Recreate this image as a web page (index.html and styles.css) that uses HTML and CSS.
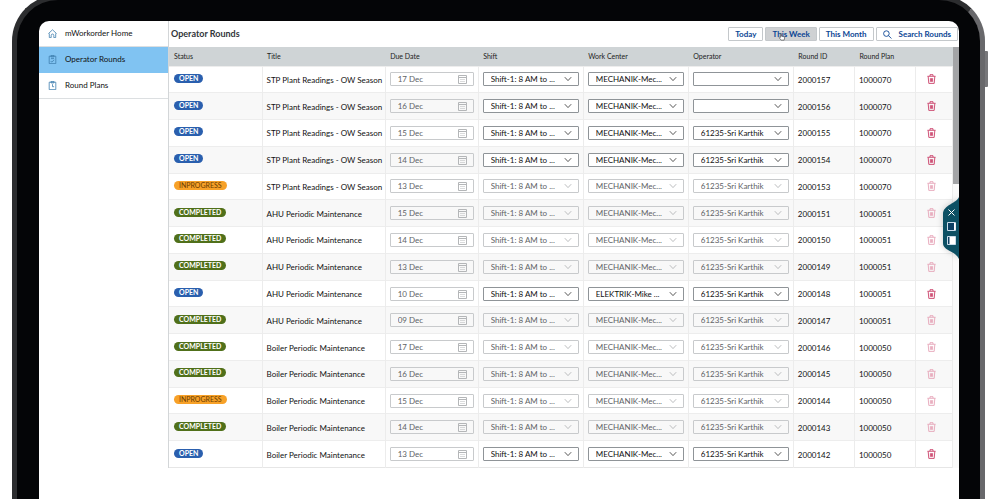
FILE: index.html
```html
<!DOCTYPE html>
<html lang="en">
<head>
<meta charset="utf-8">
<title>Operator Rounds</title>
<link rel="stylesheet" href="styles.css">
</head>
<body>
<svg class="sprite" aria-hidden="true">
  <symbol id="i-chevron" viewBox="0 0 8 6"><path d="M.8 1.2 4 4.6 7.2 1.2" fill="none" stroke="currentColor" stroke-width=".9"/></symbol>
  <symbol id="i-calendar" viewBox="0 0 9 10"><path d="M.5 1.500h8v8h-8zM.5 3.500h8" fill="none" stroke="currentColor"/><path d="M2 5.500h5M2 7.500h5" fill="none" stroke="currentColor" stroke-width=".5"/></symbol>
  <symbol id="i-trash" viewBox="0 0 9 10"><path d="M.4 2.3h8.2M3 2V.7h3V2M1.2 2.6l.6 6.800h5.400l.6-6.800M3.400 4.200v3.600M4.500 4.200v3.600M5.600 4.200v3.600" fill="none" stroke="currentColor" stroke-width=".8"/></symbol>
</svg>
<div class="device">
  <span class="side-key"></span>
  <div class="screen">
    <nav class="sidebar">
      <a class="nav-item" href="#home">
        <svg class="nav-icon" viewBox="0 0 9 9"><path d="M.4 4.6 4.5.8l4.1 3.8M1.3 4.4v4.2h1.9V6.3c0-1.7 2.6-1.7 2.6 0v2.3h1.9V4.4" fill="none" stroke="currentColor" stroke-width=".8"/></svg>
        mWorkorder Home</a>
      <a class="nav-item nav-item-active" href="#rounds" aria-current="page">
        <svg class="nav-icon" viewBox="0 0 9 9"><path d="M1.2 1.2h6.6v7.4H1.2zM3 .4h3v1.5H3zM2.7 6l1 1.1L6.2 5M3 3.6h3" fill="none" stroke="currentColor" stroke-width=".8"/></svg>
        Operator Rounds</a>
      <a class="nav-item" href="#plans">
        <svg class="nav-icon" viewBox="0 0 9 9"><path d="M1.2 1.2h6.6v7.4H1.2zM3 .4h3v1.5H3zM4.5 3.2v2.5h1.6" fill="none" stroke="currentColor" stroke-width=".8"/></svg>
        Round Plans</a>
    </nav>
    <main class="main">
      <header class="toolbar">
        <h1 class="title">Operator Rounds</h1>
        <button class="btn" type="button">Today</button>
        <button class="btn btn-pressed" type="button">This Week
          <svg class="pointer" viewBox="0 0 8 9"><path d="M2.2 5V1.2c0-.9 1.2-.9 1.2 0v2.4l2.8.6c.8.2 1 .6.8 1.4L6.4 8H3L1 5.6c-.5-.7.4-1.3 1.2-.6z" fill="#fff" stroke="#444" stroke-width=".7"/></svg>
        </button>
        <button class="btn" type="button">This Month</button>
        <button class="btn btn-search" type="button">
          <svg class="search-icon" viewBox="0 0 9 9"><path d="M6.2 3.6a2.8 2.8 0 1 1-5.6 0 2.8 2.8 0 0 1 5.6 0zM5.5 5.6l2.9 2.9" fill="none" stroke="currentColor" stroke-width=".9"/></svg>
          Search Rounds</button>
      </header>
      <div class="table-area">
        <table class="rounds">
          <colgroup>
            <col class="c-status"><col class="c-title"><col class="c-date"><col class="c-list"><col class="c-list"><col class="c-list"><col class="c-id"><col class="c-id"><col class="c-action">
          </colgroup>
          <thead>
            <tr><th>Status</th><th>Title</th><th>Due Date</th><th>Shift</th><th>Work Center</th><th>Operator</th><th>Round ID</th><th>Round Plan</th><th></th></tr>
          </thead>
          <tbody id="rows"></tbody>
        </table>
        <div class="scroll-track"><div class="scroll-thumb"></div></div>
      </div>
    </main>
    <aside class="dock">
      <svg class="dock-shape" viewBox="0 0 16 62" preserveAspectRatio="none"><path d="M16 0C14 6 0 8 0 17v29c0 8 13 8 16 16z" fill="#0c5064"/></svg>
      <button class="dock-btn" type="button" aria-label="Close"><svg viewBox="0 0 9 9"><path d="m1.5 1.5 6 6m0-6-6 6" stroke="#fff" fill="none"/></svg></button>
      <button class="dock-btn" type="button" aria-label="Dock right"><svg viewBox="0 0 9 9"><path d="M.5.5h8v8h-8z" stroke="#c9dcea" fill="#0b3f63"/><path d="M7 1h1.5v7H7z" fill="#fff"/></svg></button>
      <button class="dock-btn" type="button" aria-label="Dock left"><svg viewBox="0 0 9 9"><path d="M.5.5h8v8h-8z" stroke="#c9dcea" fill="#fff"/><path d="M1 1h1.5v7H1z" fill="#0b3f63"/></svg></button>
    </aside>
  </div>
</div>
<script src="rounds.js"></script>
</body>
</html>
```

FILE: styles.css
```css
* { box-sizing: border-box; }

body {
  margin: 0;
  background: #fff;
  color: #111;
  font-family: Lato, "Noto Sans", sans-serif;
  font-size: 8px;
  line-height: 10px;
  overflow: hidden;
}

button, input, select { font: inherit; color: inherit; margin: 0; }

.sprite { position: absolute; width: 0; height: 0; }

/* Tablet shell */
.device {
  position: relative;
  display: flex;
  min-height: calc(100vh + 5px);
  margin: -5px 15px 0 12px;
  padding: 21px 21px 0 22px;
  border: 5px solid #2c2d2f;
  border-right-color: #68686b;
  border-bottom: 0;
  border-radius: 46px 46px 0 0;
  background: #040507;
}

.side-key {
  position: absolute;
  top: 51px;
  right: -8px;
  width: 3px;
  height: 36px;
  border-radius: 0 1px 1px 0;
  background: #77777a;
}

.screen {
  position: relative;
  display: flex;
  flex: 1;
  min-width: 0;
  border-radius: 10px 10px 0 0;
  background: #fff;
  overflow: hidden;
}

/* Navigation */
.sidebar {
  flex: 0 0 129px;
  align-self: flex-start;
}

.nav-item {
  display: flex;
  align-items: center;
  gap: 8px;
  height: 26px;
  padding: 0 0 1px 9px;
  border-bottom: 1px solid #dcdfe1;
  color: #111;
  text-decoration: none;
}

.nav-item-active { background: #80c3f2; border-bottom-color: #80c3f2; }

.nav-icon { width: 9px; height: 9px; color: #3f7fae; }

.main {
  flex: 1;
  min-width: 0;
  align-self: flex-start;
  border-left: 1px solid #d3d6d8;
}

/* Toolbar */
.toolbar {
  display: flex;
  align-items: center;
  gap: 2px;
  height: 26px;
  padding: 0 1px 0 2px;
}

.title {
  flex: 1;
  margin: 0;
  font-size: 9px;
  font-weight: 700;
  color: #32363a;
}

.btn {
  position: relative;
  display: flex;
  align-items: center;
  height: 14px;
  padding: 0 6px;
  border: 1px solid #c4c8cb;
  border-radius: 1px;
  background: #fff;
  color: #0b4594;
  font-weight: 700;
}

.btn-pressed { background: #cfd1d3; }

.btn-search { gap: 7px; }

.search-icon { width: 9px; height: 9px; }

.pointer { position: absolute; left: 12px; top: 5px; width: 8px; height: 8px; }

/* Rounds table */
.table-area { display: flex; align-items: stretch; }

.rounds {
  flex: 1;
  width: 100%;
  height: 421px;
  table-layout: fixed;
  border-collapse: collapse;
  border-bottom: 1px solid #e6e6e6;
}

.c-status, .c-date { width: 93px; }
.c-title { width: 123px; }
.c-list { width: 105px; }
.c-id { width: 61px; }
.c-action { width: 37px; }

.rounds th {
  height: 19px;
  padding: 0 5px;
  background: #cfd4d6;
  color: #222;
  font-size: 7px;
  font-weight: 400;
  text-align: left;
}

.rounds td {
  padding: 0 4px;
  border-right: 1px solid #ececec;
  border-top: 1px solid #ededed;
  white-space: nowrap;
}

.rounds td:first-child { padding-left: 5px; }

.rounds .text-cell { padding-top: 1px; }

.rounds tbody tr:nth-child(even) { background: #f8f8f8; }

.badge {
  display: block;
  width: fit-content;
  height: 9px;
  margin-bottom: 2px;
  padding: 0 5px;
  border-radius: 5px;
  font-size: 7px;
  line-height: 9px;
  color: #fff;
  font-weight: 700;
}

.badge-open { background: #2a5fae; }
.badge-completed { background: #50701a; }
.badge-inprogress { background: #f7a128; color: #6a3c00; font-weight: 400; }

.field { display: grid; align-items: center; }

.field > * { grid-area: 1 / 1; }

.field-control {
  width: 100%;
  height: 14px;
  padding: 0 7px;
  border: 1px solid #8f9498;
  border-radius: 1px;
  background: #fff;
  color: #111;
  opacity: 1;
  appearance: none;
}

.field-control:disabled { border-color: #c8cacc; background: transparent; color: #606366; }

.field-icon {
  justify-self: end;
  width: 8px;
  height: 6px;
  margin-right: 7px;
  color: #444;
  pointer-events: none;
}

.field-control:disabled + .field-icon { color: #b4b6b8; }

.field-icon-date { width: 9px; height: 10px; }

.delete {
  display: block;
  margin: 0 0 0 7px;
  padding: 0;
  border: 0;
  background: none;
  color: #c42a57;
}

.delete:disabled { color: #e39ab0; }

.delete-icon { display: block; width: 9px; height: 10px; }

.scroll-track { flex: 0 0 6px; background: #fafafa; }
.scroll-thumb { height: 137px; background: #a3a4a6; }

/* Dock handle at the screen edge */
.dock {
  position: absolute;
  top: 176px;
  right: 0;
  display: flex;
  flex-direction: column;
  align-items: center;
  gap: 5px;
  width: 16px;
  height: 62px;
  padding-top: 11px;
  filter: drop-shadow(0 0 3px #0003);
}

.dock-shape { position: absolute; inset: 0; width: 16px; height: 62px; }

.dock-btn {
  position: relative;
  width: 9px;
  height: 9px;
  padding: 0;
  border: 0;
  background: none;
}

.dock-btn svg { display: block; width: 9px; height: 9px; }
```

FILE: rounds.js
```js
const STP = "STP Plant Readings - OW Season";
const AHU = "AHU Periodic Maintenance";
const BOILER = "Boiler Periodic Maintenance";
const MECH = "MECHANIK-Mec...";
const ELEK = "ELEKTRIK-Mike ...";
const SRI = "61235-Sri Karthik";

const rounds = [
  ["OPEN", STP, "17 Dec", MECH, "", "2000157", "1000070"],
  ["OPEN", STP, "16 Dec", MECH, "", "2000156", "1000070"],
  ["OPEN", STP, "15 Dec", MECH, SRI, "2000155", "1000070"],
  ["OPEN", STP, "14 Dec", MECH, SRI, "2000154", "1000070"],
  ["INPROGRESS", STP, "13 Dec", MECH, SRI, "2000153", "1000070"],
  ["COMPLETED", AHU, "15 Dec", MECH, SRI, "2000151", "1000051"],
  ["COMPLETED", AHU, "14 Dec", MECH, SRI, "2000150", "1000051"],
  ["COMPLETED", AHU, "13 Dec", MECH, SRI, "2000149", "1000051"],
  ["OPEN", AHU, "10 Dec", ELEK, SRI, "2000148", "1000051"],
  ["COMPLETED", AHU, "09 Dec", MECH, SRI, "2000147", "1000051"],
  ["COMPLETED", BOILER, "17 Dec", MECH, SRI, "2000146", "1000050"],
  ["COMPLETED", BOILER, "16 Dec", MECH, SRI, "2000145", "1000050"],
  ["INPROGRESS", BOILER, "15 Dec", MECH, SRI, "2000144", "1000050"],
  ["COMPLETED", BOILER, "14 Dec", MECH, SRI, "2000143", "1000050"],
  ["OPEN", BOILER, "13 Dec", MECH, SRI, "2000142", "1000050"],
];

const list = (label, value, off) => `<div class="field">
  <select class="field-control" aria-label="${label}" ${off}><option>${value}</option></select>
  <svg class="field-icon"><use href="#i-chevron"/></svg></div>`;

document.getElementById("rows").innerHTML = rounds.map(
  ([status, title, date, center, operator, id, plan]) => {
    const off = status === "OPEN" ? "" : "disabled";
    return `<tr>
      <td><span class="badge badge-${status.toLowerCase()}">${status}</span></td>
      <td class="text-cell">${title}</td>
      <td><div class="field">
        <input class="field-control" aria-label="Due date of ${id}" value="${date}" disabled>
        <svg class="field-icon field-icon-date"><use href="#i-calendar"/></svg></div></td>
      <td>${list("Shift of " + id, "Shift-1: 8 AM to ...", off)}</td>
      <td>${list("Work center of " + id, center, off)}</td>
      <td>${list("Operator of " + id, operator, off)}</td>
      <td class="text-cell">${id}</td>
      <td class="text-cell">${plan}</td>
      <td><button class="delete" type="button" aria-label="Delete ${id}" ${off}>
        <svg class="delete-icon"><use href="#i-trash"/></svg></button></td>
    </tr>`;
  }
).join("");
```
